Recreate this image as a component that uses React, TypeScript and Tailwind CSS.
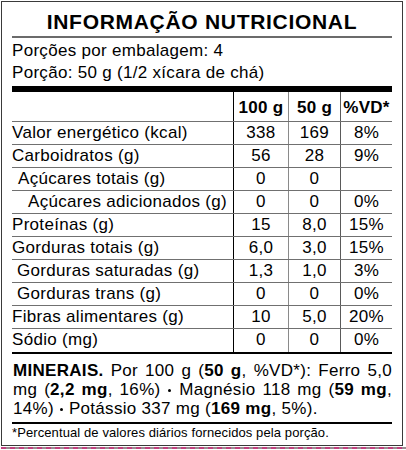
const rows = [
  { label: "Valor energético (kcal)", a: "338", b: "169", c: "8%", pad: "pl-0" },
  { label: "Carboidratos (g)", a: "56", b: "28", c: "9%", pad: "pl-0" },
  { label: "Açúcares totais (g)", a: "0", b: "0", c: "", pad: "pl-[6px]" },
  { label: "Açúcares adicionados (g)", a: "0", b: "0", c: "0%", pad: "pl-[16px]" },
  { label: "Proteínas (g)", a: "15", b: "8,0", c: "15%", pad: "pl-0" },
  { label: "Gorduras totais (g)", a: "6,0", b: "3,0", c: "15%", pad: "pl-0" },
  { label: "Gorduras saturadas (g)", a: "1,3", b: "1,0", c: "3%", pad: "pl-[5px]" },
  { label: "Gorduras trans (g)", a: "0", b: "0", c: "0%", pad: "pl-[5px]" },
  { label: "Fibras alimentares (g)", a: "10", b: "5,0", c: "20%", pad: "pl-0" },
  { label: "Sódio (mg)", a: "0", b: "0", c: "0%", pad: "pl-0" },
];

const Dot = () => (
  <span className="mx-[1px] inline-block h-[3px] w-[3px] rounded-full bg-black align-middle" />
);

export default function App() {
  return (
    <div className="min-h-[450px] w-[406px] bg-white pl-[1px] pt-[1px]">
      <div className="w-[402px] border border-[#3a3a3a] px-[10px] font-['Liberation_Sans',Arial,sans-serif] text-black">
        <div className="border-b-2 border-[#6b6b6b] pt-[5px] text-center text-[21px] font-bold leading-[29px] tracking-[0.7px]">
          INFORMAÇÃO NUTRICIONAL
        </div>

        <div className="pt-[2px] text-[17px] leading-[22px] tracking-[0.3px]">
          <p>Porções por embalagem: 4</p>
          <p>Porção: 50 g (1/2 xícara de chá)</p>
        </div>

        <div className="mt-[2px] h-[6px] bg-black" />

        {/* tabela */}
        <div className="border-b-2 border-black text-[17px] tracking-[0.3px]">
          <div className="grid h-[30px] grid-cols-[221px_55px_52px_52px] border-b border-[#707070] font-bold leading-[26px]">
            <div />
            <div className="border-l border-black pt-[3px] text-center">100 g</div>
            <div className="border-l border-[#8a8a8a] pt-[3px] text-center">50 g</div>
            <div className="border-l border-[#5a5a5a] pt-[3px] text-center">%VD*</div>
          </div>
          {rows.map((r, i) => (
            <div
              key={r.label}
              className={
                i === rows.length - 1
                  ? "grid h-[23px] grid-cols-[221px_55px_52px_52px] leading-[22px]"
                  : "grid h-[23px] grid-cols-[221px_55px_52px_52px] border-b border-[#707070] leading-[22px]"
              }
            >
              <div className={r.pad + " whitespace-nowrap"}>{r.label}</div>
              <div className="border-l border-black text-center">{r.a}</div>
              <div className="border-l border-[#8a8a8a] text-center">{r.b}</div>
              <div className="border-l border-[#5a5a5a] text-center">{r.c}</div>
            </div>
          ))}
        </div>

        {/* minerais - uma linha por div para fixar as quebras */}
        <div className="border-b-2 border-black pb-[4px] pl-[1px] pt-[7px] text-[17px] leading-[19px] tracking-[0.3px]">
          <div className="whitespace-nowrap text-justify [text-align-last:justify]">
            <b>MINERAIS.</b> Por 100 g (<b>50 g</b>, %VD*): Ferro 5,0
          </div>
          <div className="whitespace-nowrap text-justify [text-align-last:justify]">
            mg (<b>2,2 mg</b>, 16%) <Dot /> Magnésio 118 mg (<b>59 mg</b>,
          </div>
          <div className="whitespace-nowrap">
            14%) <Dot /> Potássio 337 mg (<b>169 mg</b>, 5%).
          </div>
        </div>

        <p className="pb-[4px] pt-[1px] text-[13px] leading-[16px] tracking-[0.1px]">
          *Percentual de valores diários fornecidos pela porção.
        </p>
      </div>
      <div className="mt-[1px] h-[2px] w-full bg-[repeating-linear-gradient(90deg,#c2407f_0_5px,#9a8a90_5px_9px)]" />
    </div>
  );
}
